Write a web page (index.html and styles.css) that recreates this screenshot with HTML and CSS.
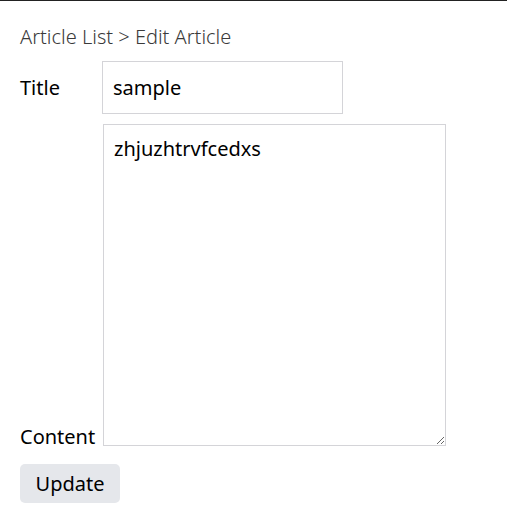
FILE: index.html
```html
<!DOCTYPE html>
<html>
<head>
<meta charset="utf-8">
<link rel="stylesheet" href="styles.css">
</head>
<body>
<div class="page">
  <nav class="crumbs">Article List &gt; Edit Article</nav>
  <form class="form">
    <div class="row row-title">
      <label class="label label-title">Title</label>
      <input class="input" type="text" value="sample">
    </div>
    <div class="row row-content">
      <label class="label">Content</label>
      <textarea class="textarea">zhjuzhtrvfcedxs</textarea>
    </div>
    <button class="btn" type="button">Update</button>
  </form>
</div>
</body>
</html>
```
FILE: styles.css
```css
html, body { margin: 0; padding: 0; background: #fff; }
body {
  border-top: 1px solid #222;
  font-family: "Noto Sans", "Open Sans", sans-serif;
  color: #000;
}
.page { padding: 22px 20px 0 20px; }
.crumbs {
  font-size: 20px;
  font-weight: 300;
  color: #3a3a3a;
  line-height: 28px;
  height: 28px;
}
.form { display: flex; flex-direction: column; margin-top: 10px; }
.row { display: flex; }
.row-title { align-items: center; }
.row-content { align-items: flex-end; margin-top: 10px; }
.label { font-size: 20px; line-height: 24px; }
.label-title { width: 82px; }
.row-content .label { width: 83px; margin-bottom: -3px; }
.input {
  box-sizing: border-box;
  width: 241px;
  height: 53px;
  border: 1px solid #d4d4d8;
  padding: 0 10px;
  font-family: inherit;
  font-size: 20px;
  color: #000;
  outline: none;
  margin: 0;
}
.textarea {
  box-sizing: border-box;
  width: 343px;
  height: 322px;
  border: 1px solid #d4d4d8;
  padding: 10px;
  font-family: inherit;
  font-size: 20px;
  line-height: 28px;
  color: #000;
  margin: 0;
  resize: both;
  outline: none;
}
.btn {
  align-self: flex-start;
  margin-top: 18px;
  width: 100px;
  height: 39px;
  border: none;
  border-radius: 5px;
  background: #e5e7eb;
  font-family: inherit;
  font-size: 20px;
  color: #000;
  padding: 0;
}
```
